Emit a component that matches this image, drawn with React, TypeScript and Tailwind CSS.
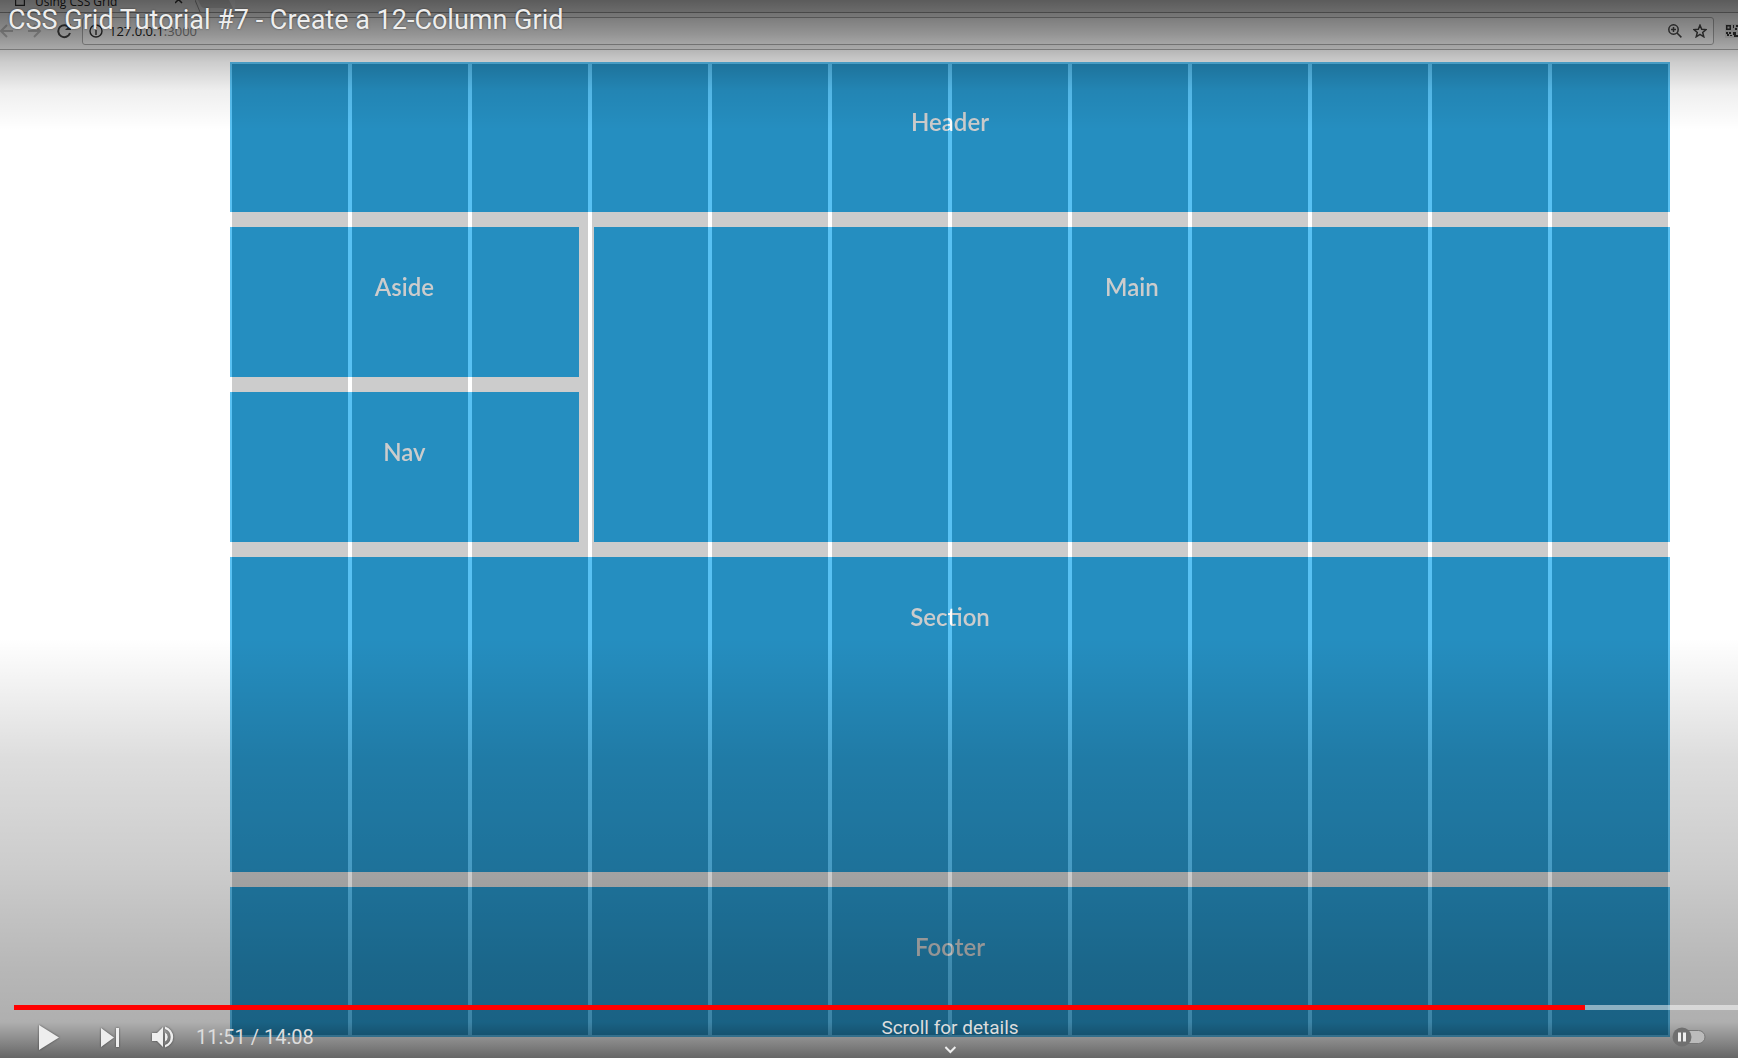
import React from "react";

const areas = [
  { tag: "header", label: "Header", cls: "col-span-12" },
  { tag: "aside", label: "Aside", cls: "col-span-3" },
  { tag: "main", label: "Main", cls: "col-span-9 row-span-2" },
  { tag: "nav", label: "Nav", cls: "col-span-3" },
  { tag: "section", label: "Section", cls: "col-span-12 row-span-2" },
  { tag: "footer", label: "Footer", cls: "col-span-12" },
] as const;

function BrowserBar() {
  return (
    <div className="h-[50px] bg-[#f0f0f0] font-['Open_Sans',sans-serif] text-[#222]">
      <div className="flex h-[13px] items-end overflow-hidden border-b border-[#999] bg-[#e4e4e4]">
        <div className="flex h-3 w-[195px] items-end bg-[#f0f0f0] pl-[15px]">
          <svg width="10" height="6" viewBox="0 0 10 6" className="mb-[6px]" fill="none" stroke="#333" strokeWidth="1.2">
            <path d="M.6 0V5.4H9.4V0" />
          </svg>
          <span className="ml-[10px] text-xs leading-5">Using CSS Grid</span>
          <svg width="8" height="8" viewBox="0 0 8 8" className="mr-3 mb-2 ml-auto" stroke="#333" strokeWidth="1.5">
            <path d="M0 7 7 0M0 0 7 7" />
          </svg>
        </div>
        <svg width="40" height="12" viewBox="0 0 40 12" className="bg-[#ececec]">
          <path d="M0 0 5 12" stroke="#999" />
          <path d="M3 0H34L38 8H9Q7 8 6 6Z" fill="#d0d0d0" />
        </svg>
      </div>
      <div className="flex h-9 items-center">
        <div className="flex w-[82px] items-center gap-[15px]">
          <svg width="14" height="14" viewBox="0 0 14 14" fill="none" stroke="#bbb" strokeWidth="2" className="-ml-px shrink-0">
            <path d="M14 7H2M8 1 2 7l6 6" />
          </svg>
          <svg width="14" height="14" viewBox="0 0 14 14" fill="none" stroke="#bbb" strokeWidth="2" className="shrink-0">
            <path d="M0 7h12M6 1l6 6-6 6" />
          </svg>
          <svg width="15" height="15" viewBox="0 0 15 15" fill="none" stroke="#444" strokeWidth="2" className="shrink-0">
            <path d="M12.4 4A6 6 0 1 0 13 9" />
            <path d="M14 0V6H8Z" fill="#444" stroke="none" />
          </svg>
        </div>
        <div className="flex h-7 flex-1 items-center rounded-[3px] border border-[#aaa] bg-[#f8f8f8] px-[6px]">
          <svg width="14" height="14" viewBox="0 0 14 14" fill="none" stroke="#333" strokeWidth="1.4">
            <circle cx="7" cy="7" r="6" />
            <path d="M7 6v5M7 3v1.600" />
          </svg>
          <span className="ml-[6px] text-[13px] leading-5">
            127.0.0.1<span className="text-[#888]">:3000</span>
          </span>
          <svg width="14" height="14" viewBox="0 0 14 14" fill="none" stroke="#444" strokeWidth="1.5" className="ml-auto">
            <circle cx="5.5" cy="5.5" r="4.7" />
            <path d="M9 9l4.400 4.400M3 5.500h5M5.500 3v5" />
          </svg>
          <svg width="14" height="14" viewBox="0 0 14 14" fill="none" stroke="#444" strokeWidth="1.5" className="ml-[11px]">
            <path d="M7 1.2 8.7 5.3 13 5.6 9.7 8.4 10.8 12.8 7 10.4 3.2 12.8 4.3 8.4 1 5.6 5.3 5.3Z" />
          </svg>
        </div>
        <div className="ml-[11px] w-[13px] overflow-hidden">
          <svg width="13" height="14" viewBox="0 0 13 14">
            <rect width="13" height="14" fill="#ddd" />
            <path d="M1 1h5v5H1zM8 1h1v3H8zM11 1h2v2h-2zM10 4h2v2h-2zM1 8h2v2H1zM4 8h2v2H4zM2 10h2v2H2zM5 11h2v1H5zM8 8h3v3H8zM9 11h4v2H9z" fill="#333" />
            <path d="M2.500 2.500h2v2h-2z" fill="#ddd" />
          </svg>
        </div>
      </div>
      <div className="h-px bg-[#aaa]" />
    </div>
  );
}

function GridPage() {
  return (
    <div className="relative isolate mt-3 mr-[68px] ml-[230px]">
      <div className="grid auto-rows-[150px] grid-cols-12 gap-[15px] bg-[#ccc]">
        {areas.map(({ tag: Tag, label, cls }) => (
          <Tag
            key={label}
            className={`${cls} bg-[#258ec0] pt-11 text-center font-['Lato',sans-serif] text-2xl leading-8 font-semibold text-[#ccc]`}
          >
            {label}
          </Tag>
        ))}
      </div>
      <div className="absolute inset-0 grid grid-cols-12 mix-blend-plus-lighter">
        {Array.from({ length: 12 }, (_, i) => (
          <div key={i} className="border-2 border-[#333]" />
        ))}
      </div>
    </div>
  );
}

function Controls() {
  return (
    <div className="absolute inset-x-0 bottom-0 font-['Roboto',sans-serif] text-[#eee]">
      <div className="ml-[14px] flex h-[5px] bg-white/50" role="progressbar" aria-label="Playback" aria-valuenow={91}>
        <div className="w-[91.1%] bg-[#f00]" />
      </div>
      <div className="relative flex h-12 items-center pt-[6px]">
        <button aria-label="Play" className="ml-[38px] drop-shadow-[0_0_1px_#0008]">
          <svg width="22" height="25" viewBox="0 0 22 25" fill="currentColor"><path d="M1 0V25L21 12.5Z" /></svg>
        </button>
        <button aria-label="Next" className="ml-[40px] drop-shadow-[0_0_1px_#0008]">
          <svg width="20" height="19" viewBox="0 0 20 19" fill="currentColor"><path d="M1 0V19L14 9.5ZM16 0h3v19h-3z" /></svg>
        </button>
        <button aria-label="Mute" className="ml-[31px] drop-shadow-[0_0_1px_#0008]">
          <svg width="24" height="22" viewBox="0 0 24 22" fill="currentColor">
            <path d="M1 7V15H6L12 21V1L6 7ZM14 6.5V15.5A5 5 0 0 0 14 6.5ZM14 .6V3A8.5 8.5 0 0 1 14 19V21.4A10.7 10.7 0 0 0 14 .6Z" />
          </svg>
        </button>
        <span className="ml-[21px] text-xl leading-6 text-[#ddd]">11:51 / 14:08</span>
        <button aria-label="Autoplay" className="mr-8 ml-auto">
          <svg width="34" height="20" viewBox="0 0 34 20">
            <rect x="8" y="3.5" width="25" height="13" rx="6.5" fill="#bbb" stroke="#777" />
            <circle cx="10" cy="10" r="9.5" fill="#707070" />
            <path d="M6 5.5h3v9H6zM11 5.5h3v9h-3z" fill="#eee" />
          </svg>
        </button>
        <button className="absolute top-[6px] left-[calc(50%+81px)] flex -translate-x-1/2 flex-col items-center text-[19px] leading-6 text-[#ddd]">
          Scroll for details
          <svg width="12" height="8" viewBox="0 0 12 8" fill="none" stroke="#eee" strokeWidth="2" className="mt-[6px]"><path d="M1 1l5 5 5-5" /></svg>
        </button>
      </div>
    </div>
  );
}

export default function App() {
  return (
    <div className="relative min-h-screen overflow-hidden bg-white pb-[21px]">
      <BrowserBar />
      <GridPage />
      <div className="absolute inset-x-0 top-0 h-[130px] bg-[linear-gradient(#0009,#0006_35px,#0003_62px,#0001_90px,#0000)]" />
      <div className="absolute inset-x-0 bottom-0 h-[420px] bg-[linear-gradient(#0000,#0002_120px,#0003_230px,#00000048_330px,#00000050_384px,#0009)]" />
      <h1 className="absolute top-1 left-2 font-['Roboto',sans-serif] text-[27px] leading-8 text-[#eee] [text-shadow:0_0_2px_#0008]">
        CSS Grid Tutorial #7 - Create a 12-Column Grid
      </h1>
      <Controls />
    </div>
  );
}
